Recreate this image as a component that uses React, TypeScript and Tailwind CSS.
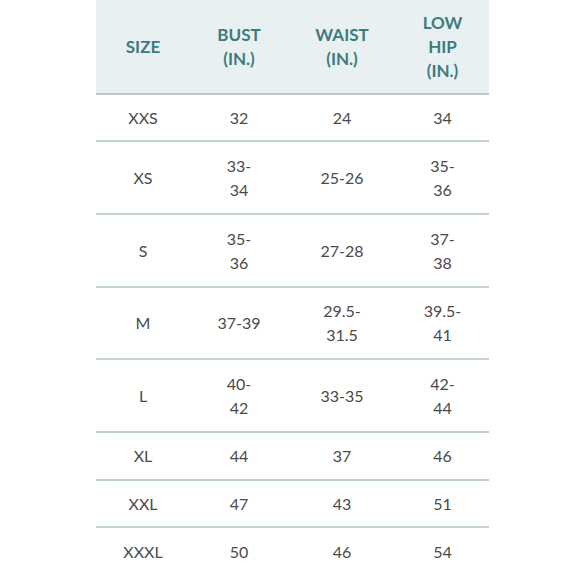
import React from "react";

const rows: { size: string; bust: string[]; waist: string[]; hip: string[]; h: string }[] = [
  { size: "XXS", bust: ["32"], waist: ["24"], hip: ["34"], h: "h-[47px]" },
  { size: "XS", bust: ["33-", "34"], waist: ["25-26"], hip: ["35-", "36"], h: "h-[73px]" },
  { size: "S", bust: ["35-", "36"], waist: ["27-28"], hip: ["37-", "38"], h: "h-[73px]" },
  { size: "M", bust: ["37-39"], waist: ["29.5-", "31.5"], hip: ["39.5-", "41"], h: "h-[72px]" },
  { size: "L", bust: ["40-", "42"], waist: ["33-35"], hip: ["42-", "44"], h: "h-[73px]" },
  { size: "XL", bust: ["44"], waist: ["37"], hip: ["46"], h: "h-[48px]" },
  { size: "XXL", bust: ["47"], waist: ["43"], hip: ["51"], h: "h-[47px]" },
  { size: "XXXL", bust: ["50"], waist: ["46"], hip: ["54"], h: "h-[48px]" },
];

function Cell({ lines }: { lines: string[] }) {
  return (
    <div className="flex flex-col items-center justify-center text-center">
      {lines.map((l, i) => (
        <span key={i} className="block leading-[24px]">
          {l}
        </span>
      ))}
    </div>
  );
}

export default function App() {
  return (
    <div
      className="w-[580px] h-[580px] bg-white overflow-hidden"
      style={{ fontFamily: "Lato, 'Noto Sans', sans-serif" }}
    >
      <div className="ml-[96px] w-[393px]">
        <div className="grid grid-cols-[94px_98px_108px_93px] h-[95px] bg-[#e8f0f1] border-b-2 border-[#b7cbcd] text-[#3e7b80] font-bold text-[17px]">
          <Cell lines={["SIZE"]} />
          <Cell lines={["BUST", "(IN.)"]} />
          <Cell lines={["WAIST", "(IN.)"]} />
          <Cell lines={["LOW", "HIP", "(IN.)"]} />
        </div>
        {rows.map((r, i) => (
          <div
            key={r.size}
            className={`grid grid-cols-[94px_98px_108px_93px] ${r.h} ${
              i < rows.length - 1 ? "border-b-2 border-[#c2d3d5]" : ""
            } text-[#4a4a4a] text-[16px]`}
          >
            <Cell lines={[r.size]} />
            <Cell lines={r.bust} />
            <Cell lines={r.waist} />
            <Cell lines={r.hip} />
          </div>
        ))}
      </div>
    </div>
  );
}
